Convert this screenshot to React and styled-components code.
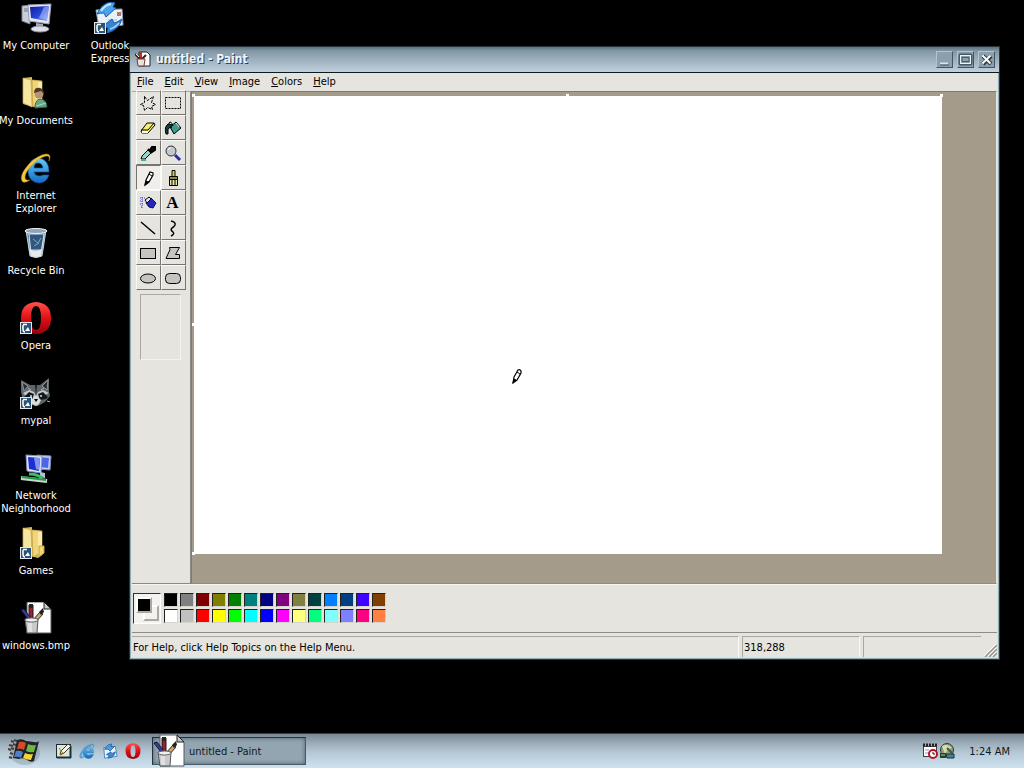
import React from "react";
import styled, { createGlobalStyle, css } from "styled-components";

const GlobalStyle = createGlobalStyle`
  * { box-sizing: border-box; }
  html, body { margin: 0; height: 100%; background: #000; }
  body, button { font-family: Tahoma, "DejaVu Sans Condensed", "Noto Sans", sans-serif; font-size: 11px; }
  button { margin: 0; padding: 0; border: 0; background: none; color: inherit; cursor: default; }
  svg { display: block; flex: none; }
`;

const Screen = styled.div`
  display: flex;
  flex-direction: column;
  height: 100vh;
  overflow: hidden;
  background: #000;
`;

const Desktop = styled.main`
  position: relative;
  flex: 1;
  min-height: 0;
`;

const IconGrid = styled.div`
  display: grid;
  grid-template-rows: repeat(9, 75px);
  grid-auto-flow: column;
  grid-auto-columns: 74px;
  justify-content: start;
`;

const Shortcut = styled.button`
  display: flex;
  flex-direction: column;
  align-items: center;
  justify-content: start;
  gap: 5px;
  padding: 2px 2px 0 0;
  color: #fff;
  line-height: 13px;
`;

const ShortcutLabel = styled.span`
  width: ${(p) => (p.$wrap ? "min-content" : "auto")};
  white-space: ${(p) => (p.$wrap ? "normal" : "nowrap")};
  text-align: center;
`;

const Window = styled.section`
  position: absolute;
  inset: 46px 24px 73px 129px;
  display: flex;
  flex-direction: column;
  border: 1px solid #26343c;
  box-shadow: inset 0 0 0 1px #8fb0b8, inset 0 0 0 2px #d6e2e4;
  background: #e5e4de;
  padding: 0 2px 2px;
`;

const TitleBar = styled.header`
  display: flex;
  align-items: center;
  gap: 5px;
  height: 26px;
  margin: 0 -2px;
  padding: 0 4px 1px 5px;
  border-bottom: 1px solid #0d1a24;
  background: linear-gradient(#5d6f7c, #8196a5 15%, #a0b2bf 55%, #c0d1dc);
`;

const Title = styled.h1`
  flex: 1;
  margin: 0;
  color: #edf5fa;
  font: bold 12px Tahoma, "DejaVu Sans Condensed", "Noto Sans", sans-serif;
  text-shadow: 1px 1px 0 #2c3a45;
`;

const WindowButtons = styled.div`
  display: flex;
  gap: 4px;
`;

const WindowButton = styled.button`
  display: grid;
  place-items: center;
  width: 17px;
  height: 17px;
  border: 1px solid;
  border-color: #b3c4cf #435662 #435662 #b3c4cf;
  background: #8c9fac;
`;

const MenuBar = styled.nav`
  display: flex;
  gap: 11px;
  height: 18px;
  padding: 0 5px;
`;

const MenuItem = styled.button`
  color: #000;
  line-height: 16px;
  &::first-letter { text-decoration: underline; }
`;

const Body = styled.div`
  display: flex;
  flex: 1;
  min-height: 0;
`;

const Toolbox = styled.aside`
  width: 59px;
  padding: 0 4px;
  border-top: 1px solid #aaa8a2;
  border-right: 1px solid #8c8983;
  border-bottom: 1px solid #8c8983;
`;

const ToolGrid = styled.div`
  display: grid;
  grid-template-columns: 25px 25px;
  grid-auto-rows: 25px;
  margin-top: -2px;
`;

const ToolButton = styled.button`
  display: grid;
  place-items: center;
  padding: 1px 2px 0 0;
  border: 1px solid;
  border-color: #fbfaf6 #77746f #77746f #fbfaf6;
  font: bold 17px "Liberation Serif", serif;
  line-height: 20px;
  color: #000;
  ${(p) =>
    p.$active &&
    css`
      border-color: #77746f #fbfaf6 #fbfaf6 #77746f;
      background: #efeeea;
    `}
`;

const ToolOptions = styled.div`
  width: 41px;
  height: 66px;
  margin: 4px 0 0 4px;
  border: 1px solid;
  border-color: #aaa8a2 #f3f2ee #f3f2ee #aaa8a2;
`;

const Workspace = styled.div`
  display: flex;
  flex: 1;
  padding: 4px 54px 29px 2px;
  border: 1px solid;
  border-color: #817a70 #e5e4de #948b7e #817a70;
  background: #a49b8b;
`;

const Canvas = styled.div`
  position: relative;
  flex: 1;
  background: #fff;
`;

const Handle = styled.i`
  position: absolute;
  width: 3px;
  height: 3px;
  background: #fff;
  left: ${(p) => p.$x};
  top: ${(p) => p.$y};
  transform: translate(-2px, -2px);
`;

const PencilCursor = styled.svg`
  position: absolute;
  left: 318px;
  top: 272px;
`;

const ColorBox = styled.div`
  display: flex;
  align-items: flex-start;
  gap: 3px;
  height: 49px;
  padding: 8px 1px;
  border-top: 1px solid #f6f5f1;
  border-bottom: 1px solid #8f8c86;
`;

const CurrentColors = styled.div`
  position: relative;
  width: 28px;
  height: 31px;
  border: 1px solid;
  border-color: #33312e #fff #fff #33312e;
  background: #f3f2ee;
`;

const CurrentChip = styled.span`
  position: absolute;
  width: 16px;
  height: 16px;
  border: 2px solid;
  border-color: #fff #aaa8a2 #aaa8a2 #fff;
  background: ${(p) => p.$color};
  ${(p) => (p.$front ? "left: 2px; top: 3px;" : "left: 9px; top: 11px;")}
`;

const Palette = styled.div`
  display: grid;
  grid-template-columns: repeat(14, 14px);
  grid-auto-rows: 14px;
  gap: 2px;
`;

const Swatch = styled.button`
  border: 1px solid;
  border-color: #22211f #d6d4ce #d6d4ce #22211f;
  background: ${(p) => p.$color};
`;

const StatusBar = styled.footer`
  display: flex;
  gap: 3px;
  height: 24px;
  padding-top: 3px;
  line-height: 22px;
`;

const StatusField = styled.div`
  flex: ${(p) => (p.$width ? "0 0 " + p.$width : "1")};
  padding-left: 1px;
  border-top: 1px solid #aaa8a2;
  border-left: ${(p) => (p.$width ? "1px solid #aaa8a2" : "0")};
  border-right: ${(p) => (p.$last ? "0" : "1px solid #fbfaf6")};
  color: #000;
`;

const Grip = styled.svg`
  align-self: flex-end;
`;

const Taskbar = styled.footer`
  display: flex;
  align-items: center;
  height: 35px;
  padding: 0 14px 0 8px;
  border-top: 1px solid #33414b;
  background: linear-gradient(#778692, #9aabb7 25%, #b5c8d5 55%, #cfe2ef);
  color: #101820;
`;

const QuickLaunch = styled.div`
  display: flex;
  gap: 7px;
  margin: 0 11px 0 16px;
`;

const BareButton = styled.button`
  display: block;
`;

const TaskButton = styled.button`
  display: flex;
  align-items: center;
  gap: 4px;
  width: 154px;
  height: 28px;
  border: 1px solid;
  border-color: #23313b #4b5b66 #4b5b66 #23313b;
  box-shadow: inset 0 0 4px #4b5b66;
  background: #93a5b1;
`;

const Tray = styled.div`
  display: flex;
  align-items: center;
  gap: 1px;
  margin-left: auto;
`;

const Clock = styled.time`
  margin-left: 13px;
`;

/* ---------- drawings ---------- */

const Arrow = () => (
  <g>
    <rect x="0.5" y="20.5" width="11" height="11" fill="#2c5575" stroke="#dfe9ee" />
    <path d="M3 22.500h4M3 23v4q0 3 2 3" stroke="#fff" fill="none" strokeWidth="1.500" />
    <path d="M5 29l3-4 2 4z" fill="#fff" />
  </g>
);

const Art = ({ size = 32, children }) => (
  <svg width={size} height={size} viewBox="0 0 32 32" aria-hidden="true">
    {children}
  </svg>
);

const ComputerArt = () => (
  <Art>
    <defs>
      <linearGradient id="scr" x1="0" y1="0" x2="1" y2="1">
        <stop offset="0" stopColor="#0a1aa0" />
        <stop offset="0.55" stopColor="#2a49d8" />
        <stop offset="1" stopColor="#9bb4f5" />
      </linearGradient>
    </defs>
    <path d="M2 4l8-1v19l-8-3z" fill="#c9cdda" stroke="#7d8290" />
    <path d="M4 7h4M4 9h4" stroke="#6d7280" />
    <path d="M8 3l23-1-2 20-20-3z" fill="#e4e7f0" stroke="#989eb0" />
    <path d="M10 5l19-1-2 15-16-3z" fill="url(#scr)" />
    <path d="M24 5l5-1-2 14-8-2z" fill="#b6c7f8" opacity="0.55" />
    <path d="M16 21l7 1v4h-7z" fill="#a9adbb" />
    <ellipse cx="20" cy="27" rx="9" ry="3" fill="#dcdfe8" stroke="#8c909d" />
  </Art>
);

const OutlookArt = () => (
  <Art>
    <path d="M2 8l26-1 1 16-24 3z" fill="#e9f1f8" stroke="#8aa4bf" />
    <path d="M23 10h4v4h-4z" fill="#b07a68" />
    <path d="M13 21h8M14 18h9" stroke="#a9b8c6" />
    <path d="M3 12Q8 1 17 0l4 1-2 4 3 1-10 9-2-4q-4 0-7 1z" fill="#49a2ea" stroke="#1b5fae" />
    <path d="M7 9q4-6 10-7" stroke="#c8e6fb" fill="none" strokeWidth="2" />
    <path d="M28 17q-3 11-15 14l1-5-5-2 9-7 2 4q4-1 8-4z" fill="#2f86d8" stroke="#1b5fae" />
    <path d="M16 27q6-2 9-6" stroke="#a8d6f7" fill="none" strokeWidth="1.500" />
    <Arrow />
  </Art>
);

const FolderShape = () => (
  <g>
    <path d="M3 1l9-1v3l10 1v24l-4 3L3 27z" fill="#d9b85a" />
    <path d="M3 1l8 2 1 27-9-4z" fill="#f6e6a0" stroke="#c9a94d" strokeWidth="0.7" />
    <path d="M12 3l10 1v21l-9 5z" fill="#f0d679" stroke="#c2a045" strokeWidth="0.7" />
    <path d="M18 5l4 0v20l-4 3z" fill="#fae9a8" />
  </g>
);

const DocumentsArt = () => (
  <Art>
    <FolderShape />
    <path d="M15 31q0-8 5-9 6 0 7 8z" fill="#69a686" stroke="#2f6b50" />
    <circle cx="19" cy="17" r="4.500" fill="#b89270" />
    <path d="M14 16q0-6 6-5 4 1 4 6l-3-3z" fill="#4b3a2c" />
    <path d="M16 29l10-3" stroke="#a8d8bd" />
  </Art>
);

const GamesArt = () => (
  <Art>
    <FolderShape />
    <path d="M19 19h5v7l-5 4z" fill="#f2d66f" stroke="#c2a045" />
    <Arrow />
  </Art>
);

const IeArt = ({ size, small }) => (
  <Art size={size}>
    <defs>
      <linearGradient id="ie" x1="0" y1="0" x2="0" y2="1">
        <stop offset="0" stopColor="#68cdf6" />
        <stop offset="1" stopColor="#136ac0" />
      </linearGradient>
    </defs>
    <path
      d="M29 20H14q1 4 5 4 3 0 4-1h6q-3 8-10 8-10-1-11-11Q8 7 18 6q11 1 11 14zM14 16h9q-1-5-5-5t-4 5z"
      fill="url(#ie)"
      stroke="#1259a5"
      strokeWidth="0.7"
      fillRule="evenodd"
    />
    <path
      d="M29 9q3-7-3-7Q18 3 9 12-1 23 2 29q2 3 8-1-5 1-5-3 0-5 8-13Q23 3 28 4q2 1 1 5z"
      fill={small ? "#5aa9de" : "#f4c838"}
      stroke={small ? "#1c65ab" : "#b98a14"}
      strokeWidth="0.5"
    />
  </Art>
);

const BinArt = () => (
  <Art>
    <path d="M6 3l4 26q6 3 12 0l4-26z" fill="#7e9ab4" stroke="#c6d6e2" />
    <path d="M8 8l3 14h10l3-14z" fill="#31577e" />
    <path d="M9 22l2 7q5 2 10 0l1-7q-6 3-13 0z" fill="#e6e9ed" />
    <path d="M9 7l2 20M24 7l-3 20" stroke="#d8e6ef" />
    <path d="M13 12l5 4 3-5M14 19l5-3" stroke="#86a8c6" fill="none" />
    <ellipse cx="16" cy="4" rx="11" ry="2.500" fill="#8fa5b8" stroke="#edf4f8" />
  </Art>
);

const OperaArt = ({ size, shortcut }) => (
  <Art size={size}>
    <defs>
      <linearGradient id="op" x1="0" y1="0" x2="0" y2="1">
        <stop offset="0" stopColor="#ff5248" />
        <stop offset="0.5" stopColor="#e01018" />
        <stop offset="1" stopColor="#970008" />
      </linearGradient>
    </defs>
    <path
      d="M16 0Q31 1 31 16T16 32Q1 31 1 16T16 0zM16 4q-5 0-5 12t5 12 5-12T16 4z"
      fill="url(#op)"
      fillRule="evenodd"
    />
    {shortcut && <Arrow />}
  </Art>
);

const RaccoonArt = () => (
  <Art>
    <path d="M1 3l9 5h10l9-7 0 13 1 5-5 6-7 4-7-1-8-5-2-8z" fill="#5d6769" />
    <path d="M2 5l6 4-4 5zM28 3l-6 6 5 4z" fill="#252d30" stroke="#8e999a" />
    <path d="M3 16l6-3 5 2 2 4 2-4 5-2 6 3-4 2-6 2-3 4-4-4-6-1z" fill="#c3c8c6" />
    <path d="M4 20l5-5 5 2-2 6-6-1zM28 20l-5-5-5 2 2 6 6-1z" fill="#14191c" />
    <path d="M11 23l4-4h2l4 4-2 4-3 2-4-2z" fill="#d9dbd8" />
    <path d="M15 8l1 11 1-11z" fill="#1a2022" />
    <path d="M14 22h4l-2 3z" fill="#000" />
    <circle cx="11" cy="19" r="1" fill="#d8e0e0" />
    <circle cx="21" cy="19" r="1" fill="#d8e0e0" />
    <path d="M8 11l3 2M24 11l-3 2M6 24l-3 1M27 24l3 1" stroke="#aab3b3" />
    <Arrow />
  </Art>
);

const NetworkArt = () => (
  <Art>
    <path d="M17 3l14 1-1 14-12-1z" fill="#c3cbf0" stroke="#7d88ad" />
    <path d="M19 5l10 1-1 10-8-1z" fill="#4c66ea" />
    <path d="M6 3l16 1-1 17-14-2z" fill="#dfe4f8" stroke="#8791c4" />
    <path d="M8 5l12 1-1 13-10-2z" fill="#1c2fd0" />
    <path d="M14 6l6 0-1 12-3-1z" fill="#7f97f2" />
    <path d="M20 20l5 1v5l-5-1z" fill="#b6bdd6" />
    <path d="M1 26l26 3" stroke="#c8d6cd" strokeWidth="4" />
    <path d="M2 25l24 3" stroke="#229a4b" strokeWidth="2" />
    <path d="M9 22q8 0 13 4" stroke="#3dbb62" strokeWidth="3" fill="none" />
  </Art>
);

const BrushCupArt = () => (
  <Art>
    <path d="M7 0h17l7 7v24H7z" fill="#fff" stroke="#55585c" />
    <path d="M24 0v7h7z" fill="#c6c9cc" stroke="#222" />
    <path d="M9 3h4v16H9z" fill="#8e2530" stroke="#241516" />
    <path d="M9 2h4v4H9z" fill="#23232b" />
    <path d="M1 8l3-1 9 12-2 2z" fill="#3a3d92" stroke="#15163d" />
    <path d="M20 10l3 2-8 9-3-2z" fill="#c6a777" stroke="#3b2b12" />
    <path d="M19 10l4-4 1 4-3 3z" fill="#222" />
    <path d="M5 17h13l-1 14H7z" fill="#c9c9cb" stroke="#55565b" />
    <ellipse cx="11.500" cy="18" rx="6.500" ry="2" fill="#efefef" stroke="#66676b" />
    <path d="M9 21v9M11 21v9" stroke="#f7f7f7" />
  </Art>
);

const TitleArt = () => (
  <svg width="16" height="16" viewBox="0 0 16 16" aria-hidden="true">
    <path d="M4 1h8l3 3v11H4z" fill="#fff" stroke="#222" />
    <path d="M4 1h3v7H4z" fill="#a8382e" />
    <path d="M0 3l5 5M11 4L7 8" stroke="#3a2018" strokeWidth="2" />
    <path d="M1 3l3 3" stroke="#f3e6d8" />
    <path d="M2 8h8l-1 7H3z" fill="#e9e2dd" stroke="#7a3a2c" />
  </svg>
);

const FlagArt = () => (
  <svg width="32" height="30" viewBox="0 0 32 30" aria-hidden="true">
    <ellipse cx="17" cy="17" rx="15" ry="12" fill="#55626c" opacity="0.25" />
    <path d="M3 5l3 1M1 9l4 1M0 13l3 1M6 4l3 1M5 8l3 1M3 12l3 1M2 17l3 1M1 21l3 1" stroke="#4c3c38" strokeWidth="2" />
    <path d="M9 4q5-2 9 1l8 1q3 1 5-1l-5 20q-3 2-7-1-4-3-8-1l-6-1z" fill="#1d2326" />
    <path d="M11 6q4-1 7 1l-2 7q-3-2-7-1z" fill="#d8482c" />
    <path d="M20 8q4 2 8 1l-2 7q-4 1-8-1z" fill="#6fb545" />
    <path d="M8 15q4-1 7 1l-2 6q-3-2-7-1z" fill="#4d7fcb" />
    <path d="M17 17q4 2 8 1l-2 6q-4 0-8-2z" fill="#f4d63a" />
  </svg>
);

const ShowDesktopArt = () => (
  <svg width="16" height="16" viewBox="0 0 16 16" aria-hidden="true">
    <rect x="0.5" y="1.500" width="14" height="13" fill="#dfe6d6" stroke="#1c2b33" />
    <path d="M1 14.500h14M14.500 3v12" stroke="#16323b" strokeWidth="2" />
    <path d="M4 12l1-4 7-7 3 2-7 7z" fill="#f7f5e8" stroke="#3d382a" />
    <path d="M4 12l3-3" stroke="#a38433" />
    <path d="M3 5l3 4" stroke="#6b8d3c" />
  </svg>
);

const MailArt = () => (
  <svg width="16" height="16" viewBox="0 0 18 18" aria-hidden="true">
    <path d="M2 5l13-1 2 11-14 2z" fill="#e7f2fa" stroke="#4a7fae" />
    <path d="M3 7q3-6 8-6l-1 3 4 0-5 5-2-2z" fill="#4b9fe0" stroke="#2566a8" />
    <path d="M15 10q-1 6-8 7l1-3-3-1 5-3 1 2z" fill="#3a8bd4" stroke="#2566a8" />
  </svg>
);

const TrayTaskArt = () => (
  <svg width="16" height="16" viewBox="0 0 16 16" aria-hidden="true">
    <rect x="1.500" y="3.500" width="13" height="10" fill="#fff" stroke="#4a3b44" />
    <path d="M1 2h14" stroke="#222" strokeWidth="3" strokeDasharray="2 1" />
    <path d="M3 7h4M3 10h4" stroke="#8f9bb4" />
    <circle cx="11" cy="11" r="4" fill="#fff" stroke="#b3142b" strokeWidth="2" />
    <path d="M11 9v2h2" stroke="#400" fill="none" />
  </svg>
);

const TrayMediaArt = () => (
  <svg width="16" height="16" viewBox="0 0 16 16" aria-hidden="true">
    <circle cx="8" cy="7" r="6.500" fill="#8e9f80" stroke="#2c3a30" />
    <path d="M3 3q5-3 10 2l-4 1-3 5z" fill="#d8dcb4" />
    <path d="M8 5l5 5" stroke="#46553c" strokeWidth="2" />
    <path d="M1 10h6v5H1z" fill="#24402f" />
    <path d="M7 11h8v4H8z" fill="#3c8791" stroke="#17343a" />
    <path d="M2 12h4" stroke="#b6d06a" />
  </svg>
);

const Tiny = ({ children }) => (
  <svg width="18" height="18" viewBox="0 0 18 18" fill="none" stroke="#000" aria-hidden="true">
    {children}
  </svg>
);

const tools = [
  ["Free-form select", <Tiny><path d="M5.500 2.500l3 4 6-4-2 6 4 2-4 2 1 3-5-2-3 3-1-5-3-1 4-2z" strokeDasharray="3 1" /></Tiny>],
  ["Select", <Tiny><rect x="1.500" y="3.500" width="15" height="11" strokeDasharray="2 1" /></Tiny>],
  ["Eraser", <Tiny><path d="M2 12l6-8h7l1 2-7 8H3z" fill="#f3ef70" /><path d="M2 11h7l6-7" /><path d="M3 12h6v2H3z" fill="#fffdd8" stroke="none" /></Tiny>],
  ["Fill", <Tiny><path d="M6 8l6-5 5 6-7 6z" fill="#3f998b" /><path d="M9 7q-2-6-4-3-1 3 3 5" /><path d="M2 15Q0 8 4 5l5 1-5 4v5z" fill="#123f3b" /><path d="M12 4l3 4" stroke="#d7eee9" /></Tiny>],
  ["Pick color", <Tiny><path d="M2 15l1-3 6-6 3 3-6 6z" fill="#8fd8cc" /><path d="M9 5l4 4M11 6l2-3h3v3l-3 2z" fill="#16090b" strokeWidth="2" /><path d="M2 16h5" stroke="#46ad9d" strokeWidth="2" /></Tiny>],
  ["Magnifier", <Tiny><circle cx="7" cy="7" r="5" fill="#c3c8cc" stroke="#33333a" /><path d="M4 6q1-2 3-2" stroke="#fff" /><path d="M11 11l5 5" stroke="#2a2aa0" strokeWidth="3" /></Tiny>],
  ["Pencil", <Tiny><path d="M7 11l4-8 3 1v2l-4 7-4 3z" fill="#fff" strokeWidth="1.200" /><path d="M10 5l3 2M6 16l1-4 3 1z" fill="#000" /></Tiny>, true],
  ["Brush", <Tiny><path d="M8 1.500h3v6H8z" fill="#d8cf50" /><path d="M5.500 7.500h8v3h-8z" fill="#8f8c35" /><path d="M5.500 10.500h8v6h-8z" fill="#eae7ac" /><path d="M8 11v5M11 11v5" /></Tiny>],
  ["Airbrush", <Tiny><path d="M9 6l3-2 5 5-3 5-4-1-3-4z" fill="#2626b8" stroke="#0b0b60" /><path d="M6 6l4-3 2 2-4 4z" fill="#e4e4ee" /><path d="M1 4h5M1 7h4M1 10h3M2 13h2M3 3v12" stroke="#4141cf" strokeDasharray="1 1" /></Tiny>],
  ["Text", "A"],
  ["Line", <Tiny><path d="M2 3l14 12" strokeWidth="1.500" /></Tiny>],
  ["Curve", <Tiny><path d="M7 2q5 1 4 4-1 2-3 3-2 2 1 4 2 2-2 4" strokeWidth="1.500" /></Tiny>],
  ["Rectangle", <Tiny><rect x="1.500" y="4.500" width="15" height="10" fill="#c4c4c2" /></Tiny>],
  ["Polygon", <Tiny><path d="M5.500 3.500h10l-4 7h4v4H2l4-9z" fill="#c4c4c2" /></Tiny>],
  ["Ellipse", <Tiny><ellipse cx="9" cy="9.500" rx="7.500" ry="4.500" fill="#c4c4c2" /></Tiny>],
  ["Rounded rectangle", <Tiny><rect x="1.500" y="4.500" width="15" height="10" rx="4" fill="#c4c4c2" /></Tiny>],
];

const shortcuts = [
  ["My Computer", <ComputerArt />],
  ["My Documents", <DocumentsArt />],
  ["Internet Explorer", <IeArt />, true],
  ["Recycle Bin", <BinArt />],
  ["Opera", <OperaArt shortcut />],
  ["mypal", <RaccoonArt />],
  ["Network Neighborhood", <NetworkArt />, true],
  ["Games", <GamesArt />],
  ["windows.bmp", <BrushCupArt />],
  ["Outlook Express", <OutlookArt />, true],
];

const colors = [
  "#000000", "#808080", "#800000", "#808000", "#008000", "#008080", "#000080",
  "#800080", "#808040", "#004040", "#0080ff", "#004080", "#4000ff", "#804000",
  "#ffffff", "#c0c0c0", "#ff0000", "#ffff00", "#00ff00", "#00ffff", "#0000ff",
  "#ff00ff", "#ffff80", "#00ff80", "#80ffff", "#8080ff", "#ff0080", "#ff8040",
];

const handles = [["0px", "0px"], ["50%", "0px"], ["100%", "0px"], ["0px", "50%"], ["0px", "100%"]];

export default function App() {
  return (
    <Screen>
      <GlobalStyle />
      <Desktop>
        <IconGrid>
          {shortcuts.map(([label, art, wrap]) => (
            <Shortcut key={label}>
              {art}
              <ShortcutLabel $wrap={wrap}>{label}</ShortcutLabel>
            </Shortcut>
          ))}
        </IconGrid>
        <Window>
          <TitleBar>
            <TitleArt />
            <Title>untitled - Paint</Title>
            <WindowButtons>
              <WindowButton aria-label="Minimize">
                <svg width="13" height="13" viewBox="0 0 13 13"><path d="M2 10.500h8" stroke="#dbe6ed" strokeWidth="2" /><path d="M2 12h9" stroke="#42535f" /></svg>
              </WindowButton>
              <WindowButton aria-label="Maximize">
                <svg width="15" height="15" viewBox="0 0 15 15" fill="none"><rect x="1.500" y="2.500" width="12" height="10" rx="1" stroke="#4a5b67" strokeWidth="2" /><rect x="2.500" y="3.500" width="10" height="8" stroke="#edf4f8" /><path d="M4 5.500h7v4H4z" stroke="#4a5b67" /></svg>
              </WindowButton>
              <WindowButton aria-label="Close">
                <svg width="15" height="15" viewBox="0 0 15 15"><path d="M4 4l8 8M12 4l-8 8" stroke="#273641" strokeWidth="4" /><path d="M3.500 3.500l8 8M11.500 3.500l-8 8" stroke="#fff" strokeWidth="2" /></svg>
              </WindowButton>
            </WindowButtons>
          </TitleBar>
          <MenuBar>
            {["File", "Edit", "View", "Image", "Colors", "Help"].map((m) => (
              <MenuItem key={m}>{m}</MenuItem>
            ))}
          </MenuBar>
          <Body>
            <Toolbox>
              <ToolGrid>
                {tools.map(([name, art, active]) => (
                  <ToolButton key={name} aria-label={name} $active={active}>{art}</ToolButton>
                ))}
              </ToolGrid>
              <ToolOptions />
            </Toolbox>
            <Workspace>
              <Canvas>
                {handles.map(([x, y]) => (
                  <Handle key={x + y} $x={x} $y={y} />
                ))}
                <PencilCursor width="10" height="16" viewBox="0 0 10 16" aria-hidden="true">
                  <path d="M2 9l4-7q2-1 3 1v2l-4 7-4 3z" fill="#fff" stroke="#000" strokeWidth="1.200" />
                  <path d="M5 4l3 2M1 15l1-4 2 1z" fill="#000" stroke="#000" />
                </PencilCursor>
              </Canvas>
            </Workspace>
          </Body>
          <ColorBox>
            <CurrentColors>
              <CurrentChip $color="#f3f2ee" />
              <CurrentChip $color="#000" $front />
            </CurrentColors>
            <Palette>
              {colors.map((c) => (
                <Swatch key={c} $color={c} aria-label={c} />
              ))}
            </Palette>
          </ColorBox>
          <StatusBar>
            <StatusField>For Help, click Help Topics on the Help Menu.</StatusField>
            <StatusField $width="118px">318,288</StatusField>
            <StatusField $width="118px" $last />
            <Grip width="13" height="13" viewBox="0 0 13 13" aria-hidden="true">
              <path d="M1 13L13 1M5 13l8-8M9 13l4-4" stroke="#98958e" strokeWidth="1.500" />
              <path d="M0 12L12 0M4 12l8-8M8 12l4-4" stroke="#fff" />
            </Grip>
          </StatusBar>
        </Window>
      </Desktop>
      <Taskbar>
        <BareButton aria-label="Start"><FlagArt /></BareButton>
        <QuickLaunch>
          <BareButton aria-label="Show desktop"><ShowDesktopArt /></BareButton>
          <BareButton aria-label="Internet Explorer"><IeArt size={16} small /></BareButton>
          <BareButton aria-label="Outlook Express"><MailArt /></BareButton>
          <BareButton aria-label="Opera"><OperaArt size={16} /></BareButton>
        </QuickLaunch>
        <TaskButton><BrushCupArt />untitled - Paint</TaskButton>
        <Tray>
          <TrayTaskArt />
          <TrayMediaArt />
          <Clock>1:24 AM</Clock>
        </Tray>
      </Taskbar>
    </Screen>
  );
}
